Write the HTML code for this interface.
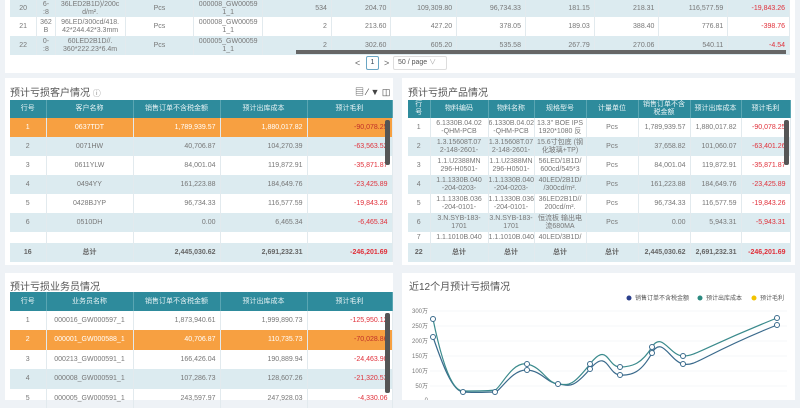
<!DOCTYPE html>
<html><head><meta charset="utf-8"><style>
*{margin:0;padding:0;box-sizing:border-box}
body{width:800px;height:400px;overflow:hidden;background:#eef2f6;font-family:"Liberation Sans","Noto Sans CJK SC",sans-serif;font-size:7px;color:#777;position:relative}
.p{position:absolute;background:#fff}
table{border-collapse:collapse;table-layout:fixed;position:absolute}
td,th{border-right:1px solid #e2eaee;text-align:center;overflow:hidden;white-space:nowrap;line-height:8px;font-weight:normal}
th{background:#2e8b9c;color:#e8f3f5;border-right:1px solid #5aa6b3}
tr.b td{background:#dcebf0}
tr.o td{background:#f7a041;color:#fff}
.r{text-align:right;padding-right:4px}
.n{color:#e0303a}
.t{position:absolute;font-size:10px;color:#555}
tr.tot td{background:#dcebf0;font-weight:bold;color:#666}
tr.tot td.n{color:#e0303a}
.sb{position:absolute;width:5px;background:#555;border-radius:2px}
</style></head><body>

<div class="p" style="left:5px;top:0;width:790px;height:73px"></div>
<table style="left:10px;top:0;width:780px">
<colgroup><col width="26"><col width="18"><col width="68"><col width="67"><col width="67"><col width="67"><col width="58"><col width="64"><col width="67"><col width="67"><col width="63"><col width="67"><col width="60"></colgroup>
<tr class="b" style="height:17px"><td>20</td><td>6-<br>:8</td><td>36LED2B1D)/200c<br>d/m².</td><td>Pcs</td><td>000008_GW00059<br>1_1</td><td class="r">534</td><td class="r">204.70</td><td class="r">109,309.80</td><td class="r">96,734.33</td><td class="r">181.15</td><td class="r">218.31</td><td class="r">116,577.59</td><td class="r n">-19,843.26</td></tr>
<tr style="height:19px"><td>21</td><td>362<br>B</td><td>96LED/300cd/418.<br>42*244.42*3.3mm</td><td>Pcs</td><td>000008_GW00059<br>1_1</td><td class="r">2</td><td class="r">213.60</td><td class="r">427.20</td><td class="r">378.05</td><td class="r">189.03</td><td class="r">388.40</td><td class="r">776.81</td><td class="r n">-398.76</td></tr>
<tr class="b" style="height:19px"><td>22</td><td>0-<br>:8</td><td>60LED2B1D//.<br>360*222.23*6.4m</td><td>Pcs</td><td>000005_GW00059<br>1_1</td><td class="r">2</td><td class="r">302.60</td><td class="r">605.20</td><td class="r">535.58</td><td class="r">267.79</td><td class="r">270.06</td><td class="r">540.11</td><td class="r n">-4.54</td></tr>
</table>
<div style="position:absolute;left:296px;top:50px;width:490px;height:4px;background:#666"></div>
<div style="position:absolute;left:355px;top:58px;font-size:9px;color:#666">&lt;</div>
<div style="position:absolute;left:366px;top:56px;width:13px;height:14px;border:1px solid #6aa6c4;border-radius:2px;text-align:center;line-height:12px;color:#345">1</div>
<div style="position:absolute;left:384px;top:58px;font-size:9px;color:#666">&gt;</div>
<div style="position:absolute;left:393px;top:56px;width:54px;height:14px;border:1px solid #ddd;border-radius:2px;line-height:12px;padding-left:4px;color:#555">50 / page <span style="color:#aaa">∨</span></div>

<div class="p" style="left:5px;top:78px;width:388px;height:187px"></div>
<div class="t" style="left:10px;top:84px">预计亏损客户情况 <span style="font-size:8px;color:#888">ⓘ</span></div>
<div style="position:absolute;left:355px;top:85px;font-size:9px;color:#444">▤ ⁄ ▼ ◫</div>
<table style="left:10px;top:100px;width:382px">
<colgroup><col width="36"><col width="87"><col width="87"><col width="87"><col width="85"></colgroup>
<tr style="height:18px"><th>行号</th><th>客户名称</th><th>销售订单不含税金额</th><th>预计出库成本</th><th>预计毛利</th></tr>
<tr class="o" style="height:19px"><td>1</td><td>0637TDT</td><td class="r">1,789,939.57</td><td class="r">1,880,017.82</td><td class="r" style="color:#c0302a">-90,078.25</td></tr>
<tr class="b" style="height:19px"><td>2</td><td>0071HW</td><td class="r">40,706.87</td><td class="r">104,270.39</td><td class="r n">-63,563.52</td></tr>
<tr style="height:19px"><td>3</td><td>0611YLW</td><td class="r">84,001.04</td><td class="r">119,872.91</td><td class="r n">-35,871.87</td></tr>
<tr class="b" style="height:19px"><td>4</td><td>0494YY</td><td class="r">161,223.88</td><td class="r">184,649.76</td><td class="r n">-23,425.89</td></tr>
<tr style="height:19px"><td>5</td><td>0428BJYP</td><td class="r">96,734.33</td><td class="r">116,577.59</td><td class="r n">-19,843.26</td></tr>
<tr class="b" style="height:19px"><td>6</td><td>0510DH</td><td class="r">0.00</td><td class="r">6,465.34</td><td class="r n">-6,465.34</td></tr>
<tr style="height:11px"><td></td><td></td><td></td><td></td><td></td></tr>
<tr class="tot" style="height:19px"><td>16</td><td>总计</td><td class="r">2,445,030.62</td><td class="r">2,691,232.31</td><td class="r n">-246,201.69</td></tr>
</table>
<div class="sb" style="left:385px;top:120px;height:45px"></div>

<div class="p" style="left:402px;top:78px;width:393px;height:187px"></div>
<div class="t" style="left:408px;top:84px">预计亏损产品情况</div>
<table style="left:408px;top:100px;width:382px">
<colgroup><col width="22"><col width="58"><col width="46"><col width="52"><col width="52"><col width="52"><col width="51"><col width="49"></colgroup>
<tr style="height:18px"><th>行<br>号</th><th>物料编码</th><th>物料名称</th><th>规格型号</th><th>计量单位</th><th>销售订单不含<br>税金额</th><th>预计出库成本</th><th>预计毛利</th></tr>
<tr style="height:19px"><td>1</td><td>6.1330B.04.02<br>-QHM-PCB</td><td>6.1330B.04.02<br>-QHM-PCB</td><td>13.3" BOE IPS<br>1920*1080 反</td><td>Pcs</td><td class="r">1,789,939.57</td><td class="r">1,880,017.82</td><td class="r n">-90,078.25</td></tr>
<tr class="b" style="height:19px"><td>2</td><td>1.3.15608T.07<br>2-148-2601-</td><td>1.3.15608T.07<br>2-148-2601-</td><td>15.6寸包底 (钢<br>化玻璃+TP)</td><td>Pcs</td><td class="r">37,658.82</td><td class="r">101,060.07</td><td class="r n">-63,401.26</td></tr>
<tr style="height:19px"><td>3</td><td>1.1.U2388MN<br>296-H0501-</td><td>1.1.U2388MN<br>296-H0501-</td><td>56LED/1B1D/<br>600cd/545*3</td><td>Pcs</td><td class="r">84,001.04</td><td class="r">119,872.91</td><td class="r n">-35,871.87</td></tr>
<tr class="b" style="height:19px"><td>4</td><td>1.1.1330B.040<br>-204-0203-</td><td>1.1.1330B.040<br>-204-0203-</td><td>40LED/2B1D/<br>/300cd/m².</td><td>Pcs</td><td class="r">161,223.88</td><td class="r">184,649.76</td><td class="r n">-23,425.89</td></tr>
<tr style="height:19px"><td>5</td><td>1.1.1330B.036<br>-204-0101-</td><td>1.1.1330B.036<br>-204-0101-</td><td>36LED2B1D//<br>200cd/m².</td><td>Pcs</td><td class="r">96,734.33</td><td class="r">116,577.59</td><td class="r n">-19,843.26</td></tr>
<tr class="b" style="height:19px"><td>6</td><td>3.N.SYB-183-<br>1701</td><td>3.N.SYB-183-<br>1701</td><td>恒流板 输出电<br>流680MA</td><td>Pcs</td><td class="r">0.00</td><td class="r">5,943.31</td><td class="r n">-5,943.31</td></tr>
<tr style="height:11px"><td>7</td><td>1.1.1010B.040</td><td>1.1.1010B.040</td><td>40LED/3B1D/</td><td></td><td></td><td></td><td></td></tr>
<tr class="tot" style="height:19px"><td>22</td><td>总计</td><td>总计</td><td>总计</td><td>总计</td><td class="r">2,445,030.62</td><td class="r">2,691,232.31</td><td class="r n">-246,201.69</td></tr>
</table>
<div class="sb" style="left:784px;top:120px;height:45px"></div>

<div class="p" style="left:5px;top:273px;width:388px;height:127px"></div>
<div class="t" style="left:10px;top:278px">预计亏损业务员情况</div>
<table style="left:10px;top:292px;width:382px">
<colgroup><col width="36"><col width="87"><col width="87"><col width="87"><col width="85"></colgroup>
<tr style="height:19px"><th>行号</th><th>业务员名称</th><th>销售订单不含税金额</th><th>预计出库成本</th><th>预计毛利</th></tr>
<tr style="height:19px"><td>1</td><td>000016_GW000597_1</td><td class="r">1,873,940.61</td><td class="r">1,999,890.73</td><td class="r n">-125,950.12</td></tr>
<tr class="o" style="height:20px"><td>2</td><td>000001_GW000588_1</td><td class="r">40,706.87</td><td class="r">110,735.73</td><td class="r" style="color:#c0302a">-70,028.86</td></tr>
<tr style="height:19px"><td>3</td><td>000213_GW000591_1</td><td class="r">166,426.04</td><td class="r">190,889.94</td><td class="r n">-24,463.90</td></tr>
<tr class="b" style="height:20px"><td>4</td><td>000008_GW000591_1</td><td class="r">107,286.73</td><td class="r">128,607.26</td><td class="r n">-21,320.53</td></tr>
<tr style="height:19px"><td>5</td><td>000005_GW000591_1</td><td class="r">243,597.97</td><td class="r">247,928.03</td><td class="r n">-4,330.06</td></tr>
</table>
<div class="sb" style="left:385px;top:313px;height:80px"></div>

<div class="p" style="left:402px;top:273px;width:393px;height:127px"></div>
<div class="t" style="left:409px;top:278px">近12个月预计亏损情况</div>
<svg style="position:absolute;left:402px;top:273px" width="393" height="127">
<g font-family="Liberation Sans,Noto Sans CJK SC,sans-serif" font-size="6" fill="#555">
<circle cx="227" cy="25" r="2.5" fill="#2b3f8c"/><text x="233" y="27">销售订单不含税金额</text>
<circle cx="298" cy="25" r="2.5" fill="#2b8a80"/><text x="304" y="27">预计出库成本</text>
<circle cx="352" cy="25" r="2.5" fill="#f2c300"/><text x="358" y="27">预计毛利</text>
<g text-anchor="end" fill="#777"><text x="26" y="40">300万</text><text x="26" y="55">250万</text><text x="26" y="70">200万</text><text x="26" y="85">150万</text><text x="26" y="100">100万</text><text x="26" y="115">50万</text><text x="26" y="129">0</text></g>
</g>
<g stroke="#eef0f2" stroke-width="0.6"><line x1="28" y1="38" x2="385" y2="38"/><line x1="28" y1="53" x2="385" y2="53"/><line x1="28" y1="68" x2="385" y2="68"/><line x1="28" y1="83" x2="385" y2="83"/><line x1="28" y1="98" x2="385" y2="98"/><line x1="28" y1="113" x2="385" y2="113"/></g>
<path d="M31 64 C40 90,50 118,61 119 S88 119,93 119 S110 96,125 97 S145 110,156 111 S170 117,188 96 S205 101,218 102 S240 98,250 80 S268 88,281 91 S300 82,375 52" fill="none" stroke="#3a6a8c" stroke-width="1.2"/>
<path d="M31 46 C40 90,50 118,61 118 S88 118,93 117 S110 88,125 91 S145 110,156 111 S170 114,188 91 S205 94,218 94 S240 90,250 74 S268 83,281 83 S300 75,375 45" fill="none" stroke="#3a8a8c" stroke-width="1.2"/>
<g fill="#fff" stroke="#3a6a8c" stroke-width="1"><circle cx="31" cy="64" r="2.5"/><circle cx="61" cy="119" r="2.5"/><circle cx="93" cy="119" r="2.5"/><circle cx="125" cy="97" r="2.5"/><circle cx="156" cy="111" r="2.5"/><circle cx="188" cy="96" r="2.5"/><circle cx="218" cy="102" r="2.5"/><circle cx="250" cy="80" r="2.5"/><circle cx="281" cy="91" r="2.5"/><circle cx="375" cy="52" r="2.5"/><circle cx="31" cy="46" r="2.5"/><circle cx="125" cy="91" r="2.5"/><circle cx="188" cy="91" r="2.5"/><circle cx="218" cy="94" r="2.5"/><circle cx="250" cy="74" r="2.5"/><circle cx="281" cy="83" r="2.5"/><circle cx="375" cy="45" r="2.5"/></g>
</svg>
</body></html>
